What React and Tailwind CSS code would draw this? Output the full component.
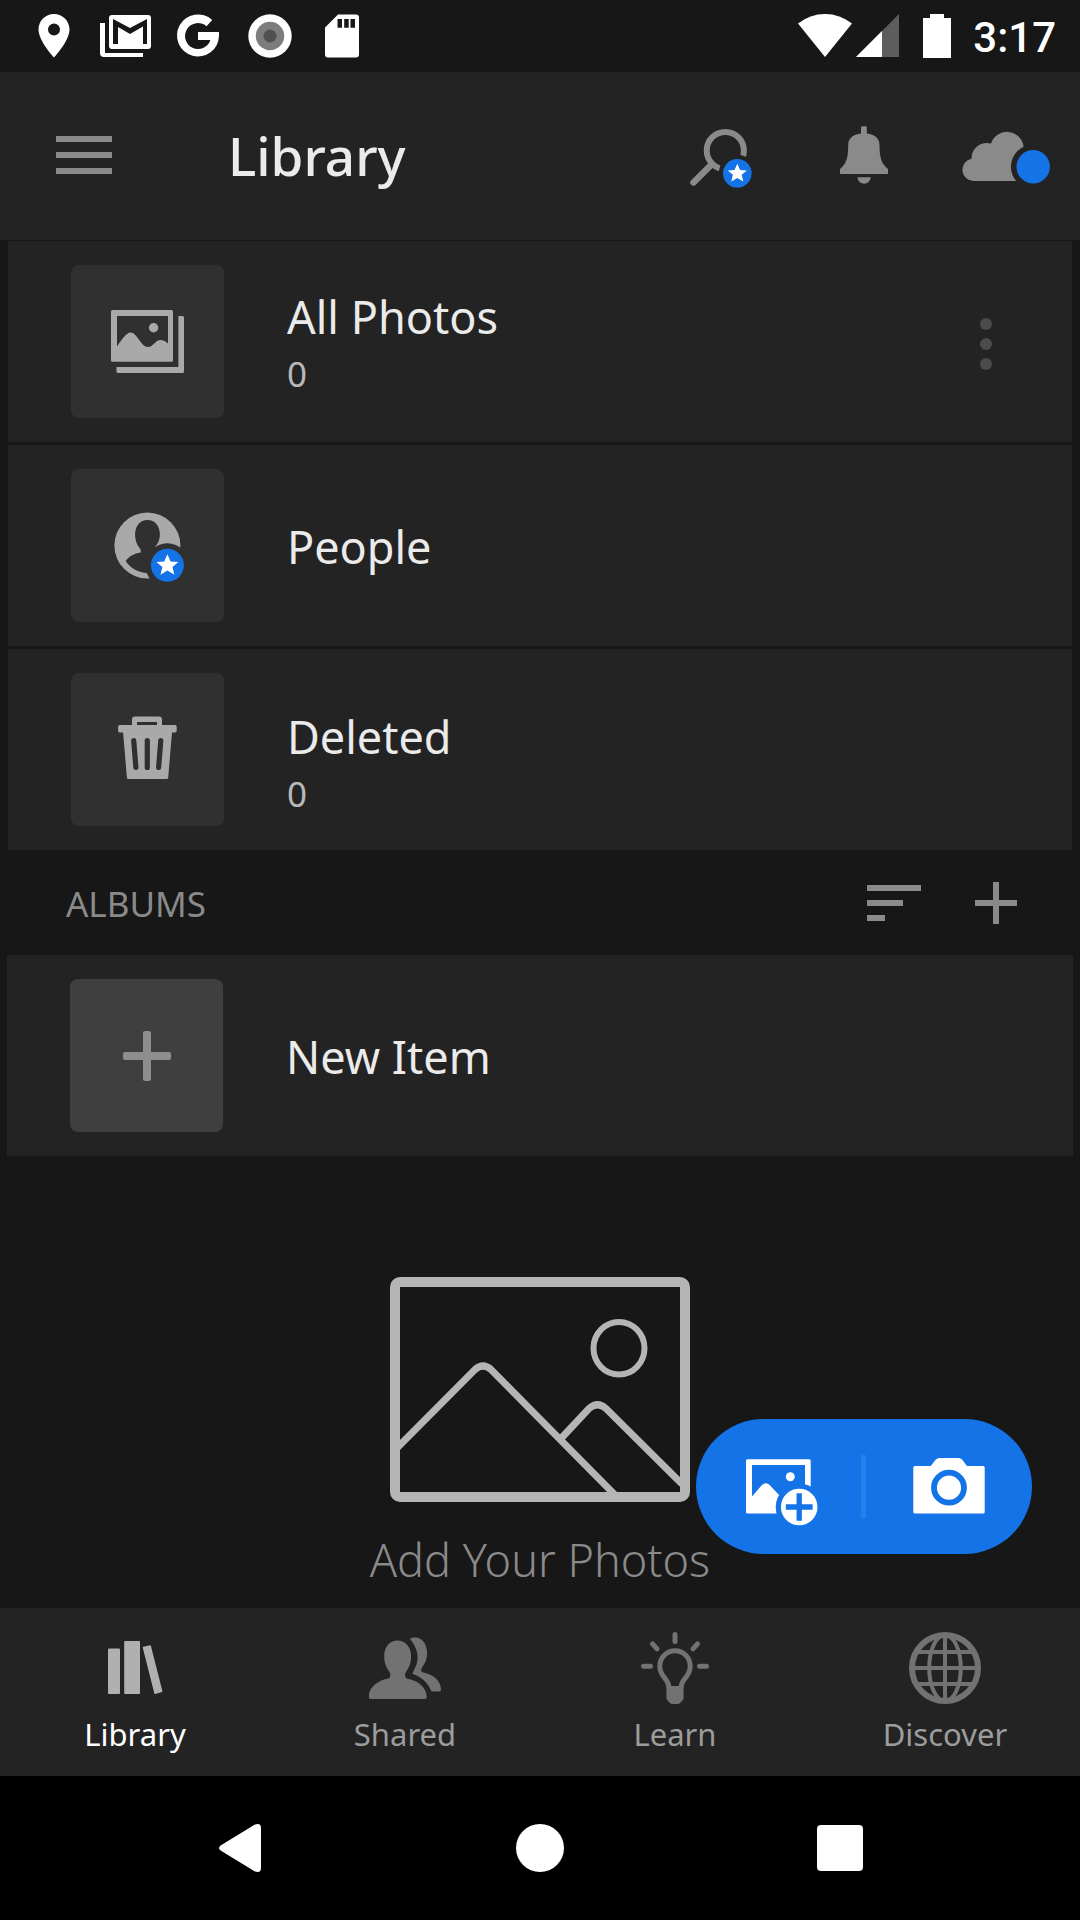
import React from "react";

const STAR =
  "M0 -10 L2.9 -3.4 L10 -3 L4.6 1.6 L6.3 8.6 L0 4.8 L-6.3 8.6 L-4.6 1.6 L-10 -3 L-2.9 -3.4 Z";

function StarBadge({ x, y, r, gap, backdrop }) {
  return (
    <g transform={`translate(${x} ${y})`}>
      <circle r={gap} fill={backdrop} />
      <circle r={r} fill="#1473e6" />
      <path d={STAR} transform={`scale(${r / 15})`} fill="#fff" />
    </g>
  );
}

/* ---------- status bar ---------- */

function StatusSlot({ children }) {
  return (
    <svg viewBox="0 0 72 72" className="size-[72px]" fill="#fff" aria-hidden="true">
      {children}
    </svg>
  );
}

function StatusBar() {
  return (
    <div className="flex h-[72px] items-center justify-between bg-[#171717] pl-[18px] pr-6">
      <div className="flex">
        <StatusSlot>
          <path
            fillRule="evenodd"
            d="M36 14c-8.700 0-15.500 7-15.500 15.500C20.500 41 36 57.500 36 57.500S51.500 41 51.500 29.500C51.500 21 44.700 14 36 14Zm0 9.500a6 6 0 1 1 0 12 6 6 0 0 1 0-12Z"
          />
        </StatusSlot>
        <StatusSlot>
          <path d="M10 23h5v30h38v4H14a4 4 0 0 1-4-4Z" />
          <rect x="19" y="15" width="42" height="34" rx="3" />
          <path fill="#171717" d="M23 19l17 9 17-9v25h-4V26.500L40 34l-12-7v17h-5Z" />
        </StatusSlot>
        <StatusSlot>
          <path d="M57 32H36v8h12.400A13 13 0 1 1 44.500 26.200L50.200 20A21 21 0 1 0 57 36Z" />
        </StatusSlot>
        <StatusSlot>
          <circle cx="36" cy="36" r="21.700" />
          <circle cx="36" cy="36" r="14.200" fill="#7c7c7c" />
          <circle cx="36" cy="36" r="6.500" fill="#505050" />
        </StatusSlot>
        <StatusSlot>
          <path d="M32 14.500h18a3 3 0 0 1 3 3v37a3 3 0 0 1-3 3H22a3 3 0 0 1-3-3V27.500Z" />
          <path fill="#171717" d="M31.500 19h4.500v8.700h-4.500zM38.200 19h4.500v8.700h-4.500zM44.500 19H49v8.700h-4.500z" />
        </StatusSlot>
      </div>
      <div className="flex items-center">
        <svg viewBox="0 0 54 72" className="h-[72px] w-[54px]" fill="#fff" aria-hidden="true">
          <path d="M0 23.500Q12 14 27 14t27 9.500L27 57Z" />
        </svg>
        <svg viewBox="0 0 43 72" className="ml-1 h-[72px] w-[43px]" aria-hidden="true">
          <path d="M43 14v43H0Z" fill="#5d5d5d" />
          <path d="M26 31v26H0Z" fill="#fff" />
        </svg>
        <svg viewBox="0 0 28 72" className="ml-6 mr-[22px] h-[72px] w-7" fill="#fff" aria-hidden="true">
          <path d="M7 14h14v4h7v40H0V18h7Z" />
        </svg>
        <time className="pt-1 font-['Roboto',sans-serif] text-[42px] font-medium leading-[48px] text-white">3:17</time>
      </div>
    </div>
  );
}

/* ---------- app header ---------- */

function SearchIcon() {
  return (
    <svg viewBox="648 72 144 168" className="h-[168px] w-36" aria-hidden="true">
      <circle cx="725.300" cy="150.500" r="18.600" fill="none" stroke="#8a8a8a" strokeWidth="6" />
      <path d="M693.500 182.500L711 165" stroke="#8a8a8a" strokeWidth="6.500" strokeLinecap="round" />
      <StarBadge x={737.3} y={173.3} r={14.3} gap={18.5} backdrop="#232323" />
    </svg>
  );
}

function BellIcon() {
  return (
    <svg viewBox="792 72 144 168" className="h-[168px] w-36" fill="#8a8a8a" aria-hidden="true">
      <path d="M861 127.500q0-1.200 1.200-1.200h3.400q1.200 0 1.200 1.200v6c8 1.300 12.700 4.500 12.700 11.500 0 13 2 18.500 8.500 24v5h-48v-5c6.500-5.500 8.200-11 8.200-24 0-7 4.800-10.200 12.800-11.500Z" />
      <path d="M857.500 177.300h13.200c-.6 8.600-12.600 8.600-13.200 0Z" />
    </svg>
  );
}

function CloudIcon() {
  return (
    <svg viewBox="936 72 144 168" className="h-[168px] w-36" aria-hidden="true">
      <path
        fill="#8a8a8a"
        d="M974 181a11.200 11.200 0 0 1-2.500-22.200A15.200 15.200 0 0 1 991 143.600a16.700 16.700 0 0 1 32.500 2.800L1030 160v21Z"
      />
      <circle cx="1033.200" cy="166.800" r="22.300" fill="#232323" />
      <circle cx="1033.200" cy="166.800" r="16.700" fill="#1473e6" />
    </svg>
  );
}

function Header() {
  return (
    <header className="flex h-[168px] items-center bg-[#232323]">
      <button type="button" aria-label="Menu" className="flex h-full w-[168px] items-center pl-14">
        <span className="flex w-14 flex-col gap-2.5 pb-[2px]">
          <span className="h-1.5 bg-[#8a8a8a]" />
          <span className="h-1.5 bg-[#8a8a8a]" />
          <span className="h-1.5 bg-[#8a8a8a]" />
        </span>
      </button>
      <h1 className="flex-1 pl-[60px] text-[53px] font-medium leading-[64px] text-[#ebebeb]">Library</h1>
      <button type="button" aria-label="Search"><SearchIcon /></button>
      <button type="button" aria-label="Notifications"><BellIcon /></button>
      <button type="button" aria-label="Cloud status"><CloudIcon /></button>
    </header>
  );
}

/* ---------- list rows ---------- */

function ThumbSvg({ viewBox, children }) {
  return (
    <svg viewBox={viewBox} className="size-[153px]" fill="#a9a9a9" aria-hidden="true">
      {children}
    </svg>
  );
}

function PhotosIcon() {
  return (
    <ThumbSvg viewBox="71 265 153 153">
      <path
        fillRule="evenodd"
        d="M112.500 310h59q1.500 0 1.500 1.500v48.700q0 1.500-1.500 1.500h-59q-1.500 0-1.500-1.500v-48.700q0-1.500 1.500-1.500ZM117 316v30.500C122 339 126.500 332.500 130.500 332.500 137 332.500 141 347 148 347 153 347 155.500 340 160.500 340 163.500 340 165.500 341.500 168 343.500V316Z"
      />
      <circle cx="153.600" cy="327.700" r="4.700" />
      <path d="M178.400 316h4q1.600 0 1.600 1.500v54q0 1.500-1.500 1.500H118q-1.500 0-1.500-1.500V367h61.900Z" />
    </ThumbSvg>
  );
}

function PeopleIcon() {
  return (
    <ThumbSvg viewBox="71 469 153 153">
      <circle cx="147.400" cy="545.500" r="33" />
      <path
        fill="#303030"
        d="M147.500 520c-7.500 0-12.400 6-12.400 14.500 0 6.500 2.200 10.500 4.800 14 1 1.500 1 2.500.8 4-6.500 1-12 4-15 8.500 5 7.500 12.500 11.500 22 12l12-8v-13l-5-4.500c3-3.500 5.200-7.500 5.200-13 0-8.500-4.900-14.500-12.400-14.500Z"
      />
      <StarBadge x={167.4} y={565.3} r={16.5} gap={22} backdrop="#303030" />
    </ThumbSvg>
  );
}

function TrashIcon() {
  return (
    <ThumbSvg viewBox="71 673 153 153">
      <path
        fillRule="evenodd"
        d="M135 716.500h24q3 0 3 3v5.500h13q1.700 0 1.700 1.700v4q0 1.800-1.700 1.800h-3l-3.800 45q-.2 1.500-1.500 1.500h-38.300q-1.300 0-1.500-1.500l-3.800-45h-3.300q-1.700 0-1.700-1.800v-4q0-1.700 1.700-1.700H132v-5.500q0-3 3-3Zm2 5.500v3h20v-3Z"
      />
      <path
        d="M133.700 740.500l2.200 27M147.300 740.500v27M160.800 740.500l-2.200 27"
        stroke="#303030"
        strokeWidth="5.200"
        strokeLinecap="round"
      />
    </ThumbSvg>
  );
}

function Row({ icon, title, count, textClass = "pt-0.5", menu }) {
  return (
    <li className="flex items-center bg-[#232323]">
      <button type="button" className="flex flex-1 items-center gap-[63px] py-6 pl-[63px] text-left">
        <span className="block rounded-lg bg-[#303030]">{icon}</span>
        <span className={textClass}>
          <span className="block text-[45px] leading-[60px] text-[#ebebeb]">{title}</span>
          {count !== undefined && (
            <span className="block text-[35px] leading-[54px] text-[#b8b8b8]">{count}</span>
          )}
        </span>
      </button>
      {menu && (
        <button type="button" aria-label={`${title} options`} className="mr-14 flex flex-col gap-2 px-6 pb-6 pt-7">
          <span className="size-3 rounded-full bg-[#4b4b4b]" />
          <span className="size-3 rounded-full bg-[#4b4b4b]" />
          <span className="size-3 rounded-full bg-[#4b4b4b]" />
        </button>
      )}
    </li>
  );
}

function AlbumsHeader() {
  return (
    <div className="flex h-[105px] items-center pl-[66px] pr-[63px]">
      <h2 className="flex-1 pt-0.5 text-[35px] leading-[54px] text-[#8a8a8a]">ALBUMS</h2>
      <button type="button" aria-label="Sort albums" className="mr-[54px] flex w-[54px] flex-col gap-[9px]">
        <span className="h-1.5 w-full bg-[#8a8a8a]" />
        <span className="h-1.5 w-2/3 bg-[#8a8a8a]" />
        <span className="h-1.5 w-1/3 bg-[#8a8a8a]" />
      </button>
      <button type="button" aria-label="Add album">
        <svg viewBox="0 0 42 42" className="size-[42px]" fill="#8a8a8a" aria-hidden="true">
          <path d="M18 0h6v18h18v6H24v18h-6V24H0v-6h18Z" />
        </svg>
      </button>
    </div>
  );
}

function NewItem() {
  return (
    <div className="px-[7px]">
      <button type="button" className="flex w-full items-center gap-[63px] bg-[#232323] py-6 pl-[63px] text-left">
        <span className="flex size-[153px] items-center justify-center rounded-lg bg-[#3f3f3f]">
          <svg viewBox="0 0 48 50" className="h-[50px] w-12" fill="#8e8e8e" aria-hidden="true">
            <rect x="20" width="8" height="50" rx="2" />
            <rect y="21" width="48" height="8" rx="2" />
          </svg>
        </span>
        <span className="pt-0.5 text-[45px] leading-[60px] text-[#ebebeb]">New Item</span>
      </button>
    </div>
  );
}

/* ---------- empty state ---------- */

function EmptyState() {
  return (
    <section className="flex flex-col items-center pb-[18px] pt-[121px]">
      <svg viewBox="0 0 300 225" className="h-[225px] w-[300px]" fill="none" stroke="#b5b5b5" aria-hidden="true">
        <rect x="5" y="5" width="290" height="215" rx="5" strokeWidth="10" />
        <ellipse cx="229" cy="71.300" rx="25.500" ry="26.300" strokeWidth="6" />
        <path d="M7 171L85 92.500Q93 85.500 101 92.500L225 218" strokeWidth="7" />
        <path d="M171 161.500L199 131.500Q207.500 124 216 131.500L292 207" strokeWidth="7" />
      </svg>
      <p className="mt-7 text-[45px] font-light leading-[60px] text-[#8a8a8a]">Add Your Photos</p>
    </section>
  );
}

function AddBar() {
  return (
    <div className="absolute bottom-[54px] right-12 flex h-[135px] items-center rounded-full bg-[#1473e6]">
      <button type="button" aria-label="Add photos">
        <svg viewBox="696 1419 165 135" className="h-[135px] w-[165px]" fill="#fff" aria-hidden="true">
          <path
            fillRule="evenodd"
            d="M747.500 1459.300h61.700q1.500 0 1.500 1.500v51.200q0 1.500-1.500 1.500h-61.700q-1.500 0-1.500-1.500v-51.200q0-1.500 1.500-1.500ZM752 1465v31.500l9.500-11q4.300-4.500 8.600 0l10.400 11L805 1490v-25Z"
          />
          <path d="M775 1492l5.500 5.500L790 1512h-15Z" />
          <circle cx="790.300" cy="1476.700" r="4.500" />
          <circle cx="799.200" cy="1507" r="23.500" fill="#1473e6" />
          <circle cx="799.200" cy="1507" r="18.300" />
          <path
            d="M788.500 1507h21.500M799.200 1496v22"
            stroke="#1473e6"
            strokeWidth="5.300"
            strokeLinecap="square"
          />
        </svg>
      </button>
      <span className="h-[63px] w-[5px] bg-[#2680eb]" />
      <button type="button" aria-label="Open camera">
        <svg viewBox="866 1419 166 135" className="h-[135px] w-[166px]" fill="#fff" aria-hidden="true">
          <path d="M915 1466h15.700l5-6.300q1.500-1.700 3.800-1.700h19q2.300 0 3.800 1.700l4.700 6.300h16.200q1.500 0 1.500 1.500v44.500q0 1.500-1.500 1.500H915q-1.700 0-1.700-1.500v-44.500q0-1.500 1.700-1.500Z" />
          <circle cx="949" cy="1487.700" r="15" stroke="#1473e6" strokeWidth="5.800" />
        </svg>
      </button>
    </div>
  );
}

/* ---------- bottom navigation ---------- */

function BooksIcon() {
  return (
    <svg viewBox="99 1632 72 72" className="size-[72px]" fill="#b0b0b0" aria-hidden="true">
      <rect x="108" y="1648.500" width="12" height="45.500" rx="1" />
      <rect x="124.200" y="1641" width="15.800" height="53" rx="1" />
      <path
        d="M143.500 1647.600l6.700-1.500 11.500 45.300-6.600 1.800Z"
        stroke="#b0b0b0"
        strokeWidth="1.500"
        strokeLinejoin="round"
      />
    </svg>
  );
}

function SharedIcon() {
  return (
    <svg viewBox="369 1632 72 72" className="size-[72px]" fill="#727272" aria-hidden="true">
      <path d="M397.500 1640.500c-8 0-13.300 6.500-13.300 15.500 0 8 2.500 12 5.300 16 1.300 2 1.300 5-.8 6.500-12 2-20 9.500-20 18.500q0 2 1.800 2h54.500q1.700 0 1.700-2c0-9-8-16.500-20-18.500-2-1.500-2-4.500-.8-6.500 2.800-4 5.200-8 5.200-16 0-9-5.600-15.500-13.600-15.500Z" />
      <path d="M409.800 1638.800c8 9 10 20 5.500 28.500l-3 6.500c9 3 15 8.500 18.500 16.200q.4 1.500 2 1.500h6.500q1.700 0 1.700-2c0-8.500-8-15.500-18.700-17.200-1.500-1-1.500-3 0-5.300 3-4 4.800-8 4.800-14 0-11-7.600-19-17.300-14.200Z" />
    </svg>
  );
}

function BulbIcon() {
  return (
    <svg viewBox="639 1632 72 72" className="size-[72px]" fill="none" stroke="#727272" strokeWidth="5" aria-hidden="true">
      <path d="M669 1688c0-10-9.200-10-9.200-22a15.200 15.200 0 0 1 30.400 0c0 12-9.200 12-9.200 22" />
      <path
        d="M666.400 1686h17.200v13l-3.500 4q-1 1-2.500 1h-5.200q-1.500 0-2.500-1l-3.500-4Z"
        fill="#727272"
        stroke="none"
      />
      <path
        d="M675 1634.500v7M652.500 1643.800l4.500 5M697.500 1643.800l-4.500 5M643.500 1666.300h7M699.500 1666.300h7"
        strokeLinecap="round"
      />
    </svg>
  );
}

function GlobeIcon() {
  return (
    <svg viewBox="909 1632 72 72" className="size-[72px]" fill="none" stroke="#727272" strokeWidth="4" aria-hidden="true">
      <circle cx="945" cy="1668" r="33" strokeWidth="6" />
      <ellipse cx="945" cy="1668" rx="15.800" ry="33" />
      <path d="M945 1634v68M912 1668h66M917 1652h56M917 1684h56" />
    </svg>
  );
}

const TABS = [
  { label: "Library", Icon: BooksIcon, active: true },
  { label: "Shared", Icon: SharedIcon },
  { label: "Learn", Icon: BulbIcon },
  { label: "Discover", Icon: GlobeIcon },
];

function BottomNav() {
  return (
    <nav className="grid h-[168px] grid-cols-4 bg-[#232323]">
      {TABS.map(({ label, Icon, active }) => (
        <a
          key={label}
          href={`#${label.toLowerCase()}`}
          aria-current={active ? "page" : undefined}
          className={`flex flex-col items-center gap-2 pt-6 text-[31px] leading-[44px] ${active ? "text-white" : "text-[#9c9c9c]"}`}
        >
          <Icon />
          {label}
        </a>
      ))}
    </nav>
  );
}

function SystemNav() {
  return (
    <div className="grid h-36 grid-cols-3 place-items-center bg-black px-[90px]">
      <button type="button" aria-label="Back">
        <svg viewBox="0 0 48 48" className="size-12" fill="#fff" aria-hidden="true">
          <path d="M5 21.200L38.500.8Q45 -1.500 45 4v40q0 5.500-6.500 3.200L5 26.800Q1 24 5 21.200Z" />
        </svg>
      </button>
      <button type="button" aria-label="Home" className="size-12 rounded-full bg-white" />
      <button type="button" aria-label="Recent apps" className="size-[46px] rounded bg-white" />
    </div>
  );
}

export default function App() {
  return (
    <div className="flex min-h-screen flex-col bg-[#171717] font-['Noto_Sans',sans-serif]">
      <StatusBar />
      <Header />
      <main className="relative flex-1">
        <ul className="flex flex-col gap-[3px] px-2 pt-px">
          <Row icon={<PhotosIcon />} title="All Photos" count="0" textClass="pt-1" menu />
          <Row icon={<PeopleIcon />} title="People" />
          <Row icon={<TrashIcon />} title="Deleted" count="0" textClass="pt-7" />
        </ul>
        <AlbumsHeader />
        <NewItem />
        <EmptyState />
        <AddBar />
      </main>
      <BottomNav />
      <SystemNav />
    </div>
  );
}
